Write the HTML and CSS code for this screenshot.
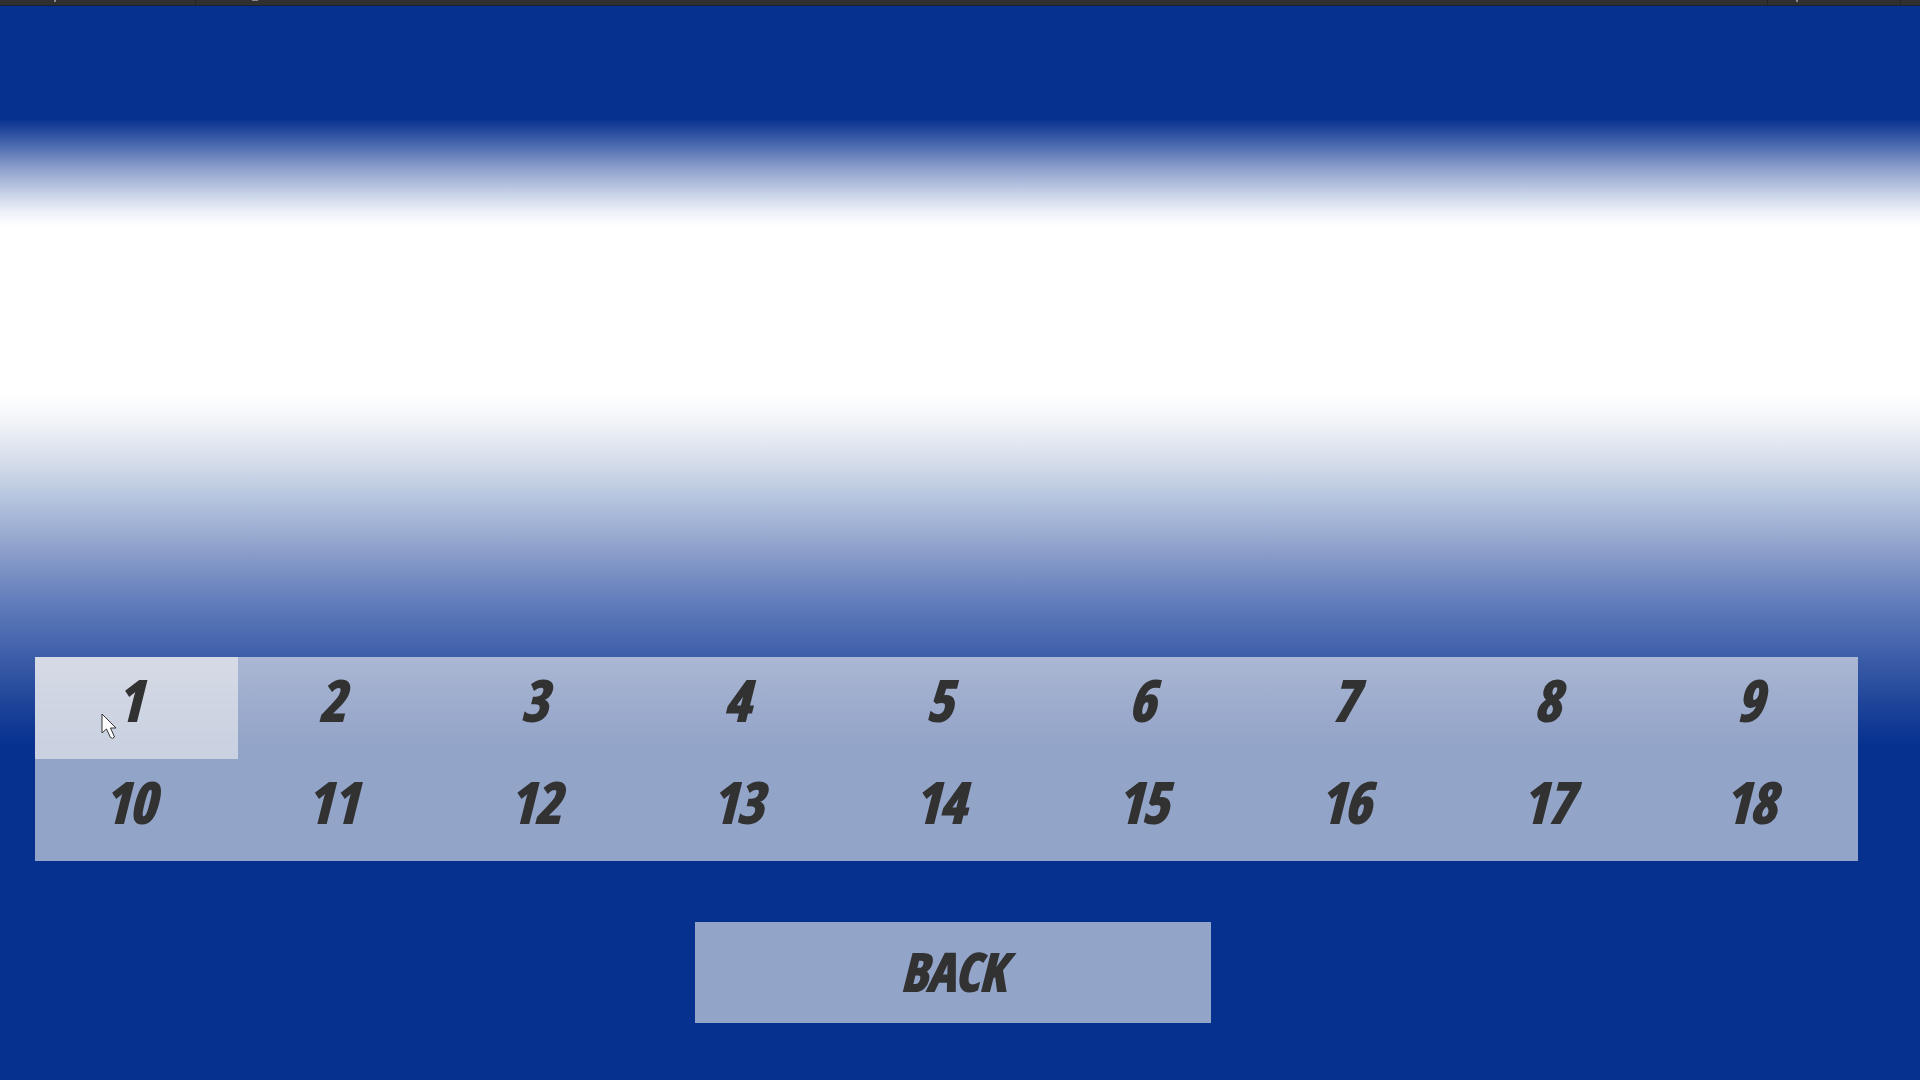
FILE: index.html
```
<!DOCTYPE html>
<html lang="en">

<head>
    <meta charset="UTF-8">
    <meta name="viewport" content="width=device-width, initial-scale=1.0">
    <title>Level Select</title>
    <link rel="stylesheet" href="styles.css">
</head>

<body>

    <header class="toolbar">
        <div class="slot slot-first"><i class="tick"></i></div>
        <div class="slot slot-second"><i class="tick tick-wide"></i></div>
        <div class="slot slot-third"><i class="tick"></i></div>
        <div class="slot slot-last"></div>
    </header>

    <main class="menu">
        <div class="levels">
            <button type="button" class="level active">1
                <svg class="pointer" viewBox="0 0 16 27" aria-hidden="true">
                    <path d="M1 1 V20 L5.500 16 L9.500 24.500 Q11.500 26.500 13.500 24 L9.500 15 H15 Z" />
                </svg>
            </button>
            <button type="button" class="level">2</button>
            <button type="button" class="level">3</button>
            <button type="button" class="level">4</button>
            <button type="button" class="level">5</button>
            <button type="button" class="level">6</button>
            <button type="button" class="level">7</button>
            <button type="button" class="level">8</button>
            <button type="button" class="level">9</button>
            <button type="button" class="level">10</button>
            <button type="button" class="level">11</button>
            <button type="button" class="level">12</button>
            <button type="button" class="level">13</button>
            <button type="button" class="level">14</button>
            <button type="button" class="level">15</button>
            <button type="button" class="level">16</button>
            <button type="button" class="level">17</button>
            <button type="button" class="level">18</button>
        </div>

        <div class="actions">
            <button type="button" class="back">BACK</button>
        </div>
    </main>

</body>

</html>
```

FILE: styles.css
```
* {
    box-sizing: border-box;
}

body {
    margin: 0;
    min-height: 100vh;
    display: flex;
    flex-direction: column;
    font-family: "Open Sans Condensed", "Liberation Sans Narrow", "DejaVu Sans Condensed", sans-serif;
    background: linear-gradient(#06318f 11%,
            #3e5fa9 13%,
            #8a9dcb 15.5%,
            #c9d3e8 18%,
            #eef2f9 19.7%,
            #ffffff 21%,
            #ffffff 36.6%,
            #eef1f7 39.5%,
            #d3dbe9 43%,
            #b6c6df 46%,
            #8c9fca 51%,
            #5f7bba 56%,
            #3b5ca7 61%,
            #1f459a 65%,
            #06318f 69%);
}

.toolbar {
    display: flex;
    height: 6px;
    background: #303030;
    border-bottom: 1px solid #1b2036;
}

.slot {
    border-right: 1px solid #222222;
}

.slot-first {
    width: 196px;
    padding-left: 54px;
}

.slot-second {
    flex: 1;
    padding-left: 56px;
}

.slot-third {
    width: 133px;
    padding-left: 28px;
}

.slot-last {
    width: 19px;
    border-right: none;
}

.tick {
    display: block;
    width: 2px;
    height: 2px;
    background: #8a8a8a;
}

.tick-wide {
    width: 6px;
    height: 1px;
}

.menu {
    flex: 1;
    display: flex;
    flex-direction: column;
    justify-content: flex-end;
    gap: 61px;
    padding: 0 62px 57px 35px;
}

.levels {
    display: grid;
    grid-template-columns: repeat(9, 1fr);
}

.level,
.back {
    border: none;
    color: #323232;
    background: rgba(255, 252, 244, 0.57);
    font-family: inherit;
    font-size: 56px;
    font-weight: bold;
    font-style: italic;
    line-height: 64px;
    -webkit-text-stroke: 2px #323232;
    cursor: pointer;
}

.level {
    position: relative;
    height: 102px;
    padding: 0 14px 18px 0;
}

.level:hover,
.level.active {
    background: rgba(255, 252, 246, 0.79);
}

.pointer {
    position: absolute;
    left: 66px;
    top: 56px;
    width: 16px;
    height: 27px;
    fill: #ffffff;
    stroke: #333333;
    stroke-width: 1;
}

.actions {
    display: flex;
    justify-content: center;
    padding-left: 13px;
}

.back {
    width: 516px;
    height: 101px;
    padding: 0 0 4px;
    font-size: 52px;
}
```
